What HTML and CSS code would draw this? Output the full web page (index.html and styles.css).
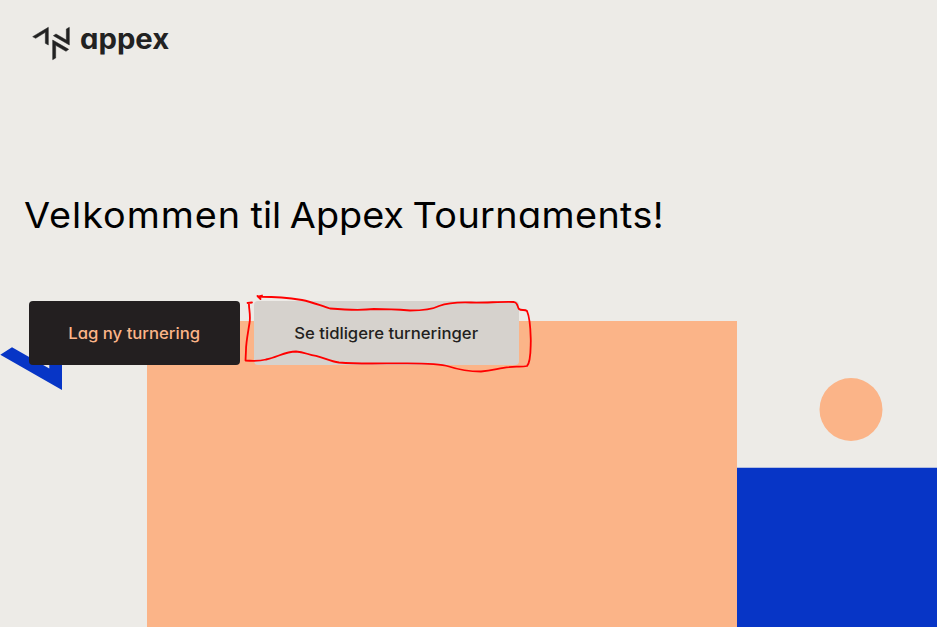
FILE: index.html
```html
<!DOCTYPE html>
<html lang="no">
<head>
<meta charset="utf-8">
<title>Appex Tournaments</title>
<link rel="stylesheet" href="styles.css">
</head>
<body>
<svg class="backdrop" viewBox="0 0 937 627" aria-hidden="true">
  <path class="peach" d="M147 321H737V627H147zM882.5 409.5a31.5 31.5 0 1 1-63 0a31.5 31.5 0 1 1 63 0z"/>
  <path class="blue" d="M737 467.7H937V627H737zM.3 354.7L12 347.3L49.3 368.5V350L62 343V390z"/>
</svg>
<header class="header">
  <a class="brand">
    <svg class="mark" viewBox="36 36 112 99" aria-hidden="true">
      <path d="M37 65L84 37V90L75 85V52L46 70zM147 37V90L99 62L107 57L138 75V42zM97 134V75L145 103L137 109L106 91V129z"/>
    </svg>
    <span class="brand-name">appex</span>
  </a>
</header>
<main class="main">
  <h1 class="title"><span class="w1">Velkommen</span> <span class="w2">til</span> <span class="w3">Appex</span> <span class="w4">Tournaments!</span></h1>
  <div class="actions">
    <button class="button primary"><span>Lag ny turnering</span></button>
    <button class="button secondary"><span>Se tidligere turneringer</span></button>
  </div>
</main>
<svg class="scribble" viewBox="0 0 937 627" aria-hidden="true">
  <path d="M247.5 303L252 302.5M249 303C248.500 308 251 315 249.500 323C248 333 246 342 246 350L245.500 360.500C252 361 259 361.300 266 359.500C278 357 285 351.500 296 351.500C305 352 308 355 316 355.800C325 358 330 361.500 339 362.500C357 364 376 363.500 393 363.300C412 363.700 436 362.500 449 366.500C461 370.500 471 371.500 481 371.500C493 371 499 367.800 509 367.200C516 366 521 367.500 527 366C531 362 530.500 350 530.800 341C530.500 329 530.500 319 527 311C525 309 521 311 519 309C517 306 518 303 514 302C501 301.500 484 303 471 302.500C457 302 447 303 439 306C431 310 421 310.500 410 310.500C397 309.500 385 309 374 309C361 310.500 342 309.500 330 308.500C321 306 313 302 302 300C289 298 277 296.500 258 296.800M257.500 296L260.500 299M258 296.500L262 295.500"/>
</svg>
</body>
</html>
```
FILE: styles.css
```css
* { box-sizing: border-box; }

body {
  margin: 0;
  height: 627px;
  overflow: hidden;
  position: relative;
  background: #edebe7;
  color: #000;
  font-family: Inter, "Open Sans", sans-serif;
  font-feature-settings: "cv11";
}

.backdrop, .scribble {
  position: absolute;
  inset: 0;
  width: 937px;
  height: 627px;
}
.backdrop { z-index: -1; }
.peach { fill: #fbb488; }
.blue { fill: #0735c6; }
.scribble { pointer-events: none; }
.scribble path {
  fill: none;
  stroke: #f00;
  stroke-width: 1.8;
  stroke-linejoin: round;
  stroke-linecap: round;
}

.header { height: 86px; padding: 27px 32px 0; }
.brand { display: flex; gap: 10px; color: #222; }
.mark {
  width: 38px;
  height: 33px;
  fill: currentColor;
  stroke: currentColor;
  stroke-width: 1.5;
  overflow: visible;
}
.brand-name {
  font-size: 28px;
  font-weight: 700;
  line-height: 24px;
  transform: scaleX(1.045);
  transform-origin: left;
}

.main { padding: 102px 24px 0; }
.title {
  width: fit-content;
  margin: 0;
  font-size: 36px;
  font-weight: 400;
  line-height: 54px;
  white-space: nowrap;
  transform: scaleX(1.05);
  transform-origin: left;
}
.w1 { letter-spacing: 0.9px; }
.w2 { margin-left: -1px; }
.w3 { margin-left: -2px; }
.w4 { letter-spacing: 0.35px; margin-left: -2px; }

.actions { display: flex; gap: 14px; margin: 59px 0 0 5px; }
.button {
  height: 64px;
  padding: 0;
  border: 0;
  border-radius: 4px;
  font: 500 16px/24px Inter, "Open Sans", sans-serif;
  font-feature-settings: "cv11";
  white-space: nowrap;
}
.button span { display: inline-block; transform: scaleX(1.043); }
.primary { width: 211px; background: #231f20; color: #fbb488; }
.secondary { width: 265px; background: #d6d2cd; color: #231f20; }
```
